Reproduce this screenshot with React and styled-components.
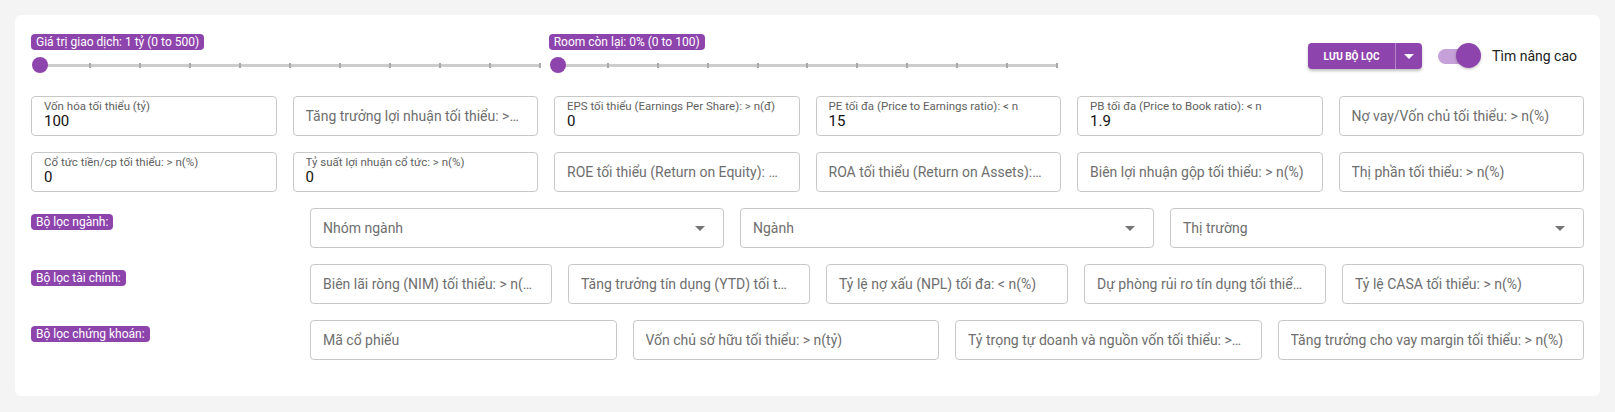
import React from "react";
import styled, { createGlobalStyle } from "styled-components";

const PURPLE = "#8e44ad";

const topFields = [
  { label: "Vốn hóa tối thiểu (tỷ)", value: "100" },
  { label: "Tăng trưởng lợi nhuận tối thiểu: > n(%)" },
  { label: "EPS tối thiểu (Earnings Per Share): > n(đ)", value: "0" },
  { label: "PE tối đa (Price to Earnings ratio): < n", value: "15" },
  { label: "PB tối đa (Price to Book ratio): < n", value: "1.9" },
  { label: "Nợ vay/Vốn chủ tối thiểu: > n(%)" },
  { label: "Cổ tức tiền/cp tối thiểu: > n(%)", value: "0" },
  { label: "Tỷ suất lợi nhuận cổ tức: > n(%)", value: "0" },
  { label: "ROE tối thiểu (Return on Equity): > n(%)" },
  { label: "ROA tối thiểu (Return on Assets): > n(%)" },
  { label: "Biên lợi nhuận gộp tối thiểu: > n(%)" },
  { label: "Thị phần tối thiểu: > n(%)" },
];

const financeFields = [
  "Biên lãi ròng (NIM) tối thiểu: > n(%)",
  "Tăng trưởng tín dụng (YTD) tối thiểu: > n(%)",
  "Tỷ lệ nợ xấu (NPL) tối đa: < n(%)",
  "Dự phòng rủi ro tín dụng tối thiểu: > n(%)",
  "Tỷ lệ CASA tối thiểu: > n(%)",
];

const stockFields = [
  "Mã cổ phiếu",
  "Vốn chủ sở hữu tối thiểu: > n(tỷ)",
  "Tỷ trọng tự doanh và nguồn vốn tối thiểu: > n(%)",
  "Tăng trưởng cho vay margin tối thiểu: > n(%)",
];

const GlobalStyle = createGlobalStyle`
  body {
    margin: 0;
    background: #f4f4f4;
    font-family: Roboto, "Noto Sans", sans-serif;
  }
  * { box-sizing: border-box; }
`;

const Slider = ({ label }) => (
  <SliderBox>
    <Badge>{label}</Badge>
    <Track>
      {Array.from({ length: 10 }).map((_, i) => (
        <Tick key={i} style={{ left: `${(i + 1) * 10}%` }} />
      ))}
      <Thumb />
    </Track>
  </SliderBox>
);

const Field = ({ label, value }) =>
  value !== undefined ? (
    <FieldBox>
      <SmallLabel>{label}</SmallLabel>
      <Value>{value}</Value>
    </FieldBox>
  ) : (
    <FieldBox $tight>
      <Placeholder>{label}</Placeholder>
    </FieldBox>
  );

const Caret = ({ color }) => (
  <svg width="10" height="5" viewBox="0 0 10 5">
    <path d="M0 0 L10 0 L5 5 Z" fill={color} />
  </svg>
);

const App = () => {
  return (
    <>
      <GlobalStyle />
      <Page>
        <Card>
          <TopBar>
            <Slider label="Giá trị giao dịch: 1 tỷ (0 to 500)" />
            <Slider label="Room còn lại: 0% (0 to 100)" />
            <Actions>
              <SplitButton>
                <MainButton>LƯU BỘ LỌC</MainButton>
                <ArrowButton>
                  <Caret color="#fff" />
                </ArrowButton>
              </SplitButton>
              <Switch>
                <SwitchTrack />
                <SwitchThumb />
              </Switch>
              <SwitchLabel>Tìm nâng cao</SwitchLabel>
            </Actions>
          </TopBar>

          <FieldGrid $cols={6}>
            {topFields.map((f) => (
              <Field key={f.label} label={f.label} value={f.value} />
            ))}
          </FieldGrid>

          <GroupRow>
            <GroupLabel>
              <Badge>Bộ lọc ngành:</Badge>
            </GroupLabel>
            <FieldGrid $cols={3}>
              {["Nhóm ngành", "Ngành", "Thị trường"].map((s) => (
                <SelectBox key={s}>
                  <Placeholder>{s}</Placeholder>
                  <Caret color="#757575" />
                </SelectBox>
              ))}
            </FieldGrid>
          </GroupRow>

          <GroupRow>
            <GroupLabel>
              <Badge>Bộ lọc tài chính:</Badge>
            </GroupLabel>
            <FieldGrid $cols={5}>
              {financeFields.map((f) => (
                <Field key={f} label={f} />
              ))}
            </FieldGrid>
          </GroupRow>

          <GroupRow>
            <GroupLabel>
              <Badge>Bộ lọc chứng khoán:</Badge>
            </GroupLabel>
            <FieldGrid $cols={4}>
              {stockFields.map((f) => (
                <Field key={f} label={f} />
              ))}
            </FieldGrid>
          </GroupRow>
        </Card>
      </Page>
    </>
  );
};

export default App;

const Page = styled.div`
  padding: 15px;
`;

const Card = styled.div`
  background: #fff;
  border-radius: 6px;
  padding: 19px 16px 36px;
  display: flex;
  flex-direction: column;
  gap: 16px;
`;

const TopBar = styled.div`
  display: grid;
  grid-template-columns: 1fr 1fr 1fr;
  height: 46px;
`;

const SliderBox = styled.div`
  display: flex;
  flex-direction: column;
  align-items: flex-start;
`;

const Badge = styled.span`
  display: inline-block;
  background: ${PURPLE};
  color: #fff;
  font-size: 12px;
  line-height: 16px;
  padding: 0 5px;
  border-radius: 4px;
  white-space: nowrap;
`;

const Track = styled.div`
  position: relative;
  align-self: stretch;
  margin: 14px 9px 0;
  height: 3px;
  background: #cdcdcd;
`;

const Tick = styled.span`
  position: absolute;
  top: -1px;
  width: 2px;
  height: 5px;
  margin-left: -1px;
  background: #a9a9a9;
`;

const Thumb = styled.span`
  position: absolute;
  left: -8px;
  top: -7px;
  width: 16px;
  height: 16px;
  border-radius: 50%;
  background: ${PURPLE};
`;

const Actions = styled.div`
  display: flex;
  justify-content: flex-end;
  align-items: center;
  height: 26px;
  margin-top: 9px;
  padding-right: 7px;
`;

const SplitButton = styled.div`
  display: flex;
  height: 26px;
  border-radius: 4px;
  background: ${PURPLE};
  box-shadow: 0 2px 3px rgba(0, 0, 0, 0.25);
  overflow: hidden;
`;

const MainButton = styled.button`
  width: 87px;
  border: 0;
  background: transparent;
  color: #fff;
  font-family: Roboto, sans-serif;
  font-size: 10px;
  font-weight: 700;
  padding: 0;
`;

const ArrowButton = styled.button`
  width: 27px;
  border: 0;
  border-left: 1px solid rgba(255, 255, 255, 0.35);
  background: transparent;
  display: flex;
  align-items: center;
  justify-content: center;
  padding: 0;
`;

const Switch = styled.div`
  position: relative;
  width: 42px;
  height: 26px;
  margin-left: 16px;
  display: flex;
  align-items: center;
`;

const SwitchTrack = styled.span`
  width: 42px;
  height: 15px;
  border-radius: 8px;
  background: #c6a0d8;
`;

const SwitchThumb = styled.span`
  position: absolute;
  right: -1px;
  top: 0;
  width: 25px;
  height: 25px;
  border-radius: 50%;
  background: ${PURPLE};
  box-shadow: 0 1px 3px rgba(0, 0, 0, 0.25);
`;

const SwitchLabel = styled.span`
  margin-left: 12px;
  font-size: 14px;
  color: #222;
`;

const FieldGrid = styled.div`
  display: grid;
  grid-template-columns: repeat(${(p) => p.$cols}, minmax(0, 1fr));
  gap: 16px;
`;

const FieldBox = styled.div`
  height: 40px;
  border: 1px solid #c8c8c8;
  border-radius: 4px;
  padding: ${(p) => (p.$tight ? "0 16px 0 12px" : "0 12px")};
  display: flex;
  flex-direction: column;
  justify-content: center;
  min-width: 0;
`;

const SelectBox = styled(FieldBox)`
  flex-direction: row;
  align-items: center;
  justify-content: space-between;
  padding-right: 18px;
`;

const Placeholder = styled.span`
  font-size: 14px;
  color: #6e6e6e;
  white-space: nowrap;
  overflow: hidden;
  text-overflow: ellipsis;
`;

const SmallLabel = styled.span`
  font-size: 11.5px;
  line-height: 13px;
  margin-top: -2px;
  color: #5f5f5f;
  white-space: nowrap;
  overflow: hidden;
  text-overflow: ellipsis;
`;

const Value = styled.span`
  font-size: 15px;
  line-height: 17px;
  color: #111;
`;

const GroupRow = styled.div`
  display: grid;
  grid-template-columns: 263px 1fr;
  gap: 16px;
`;

const GroupLabel = styled.div`
  padding-top: 3px;
`;
